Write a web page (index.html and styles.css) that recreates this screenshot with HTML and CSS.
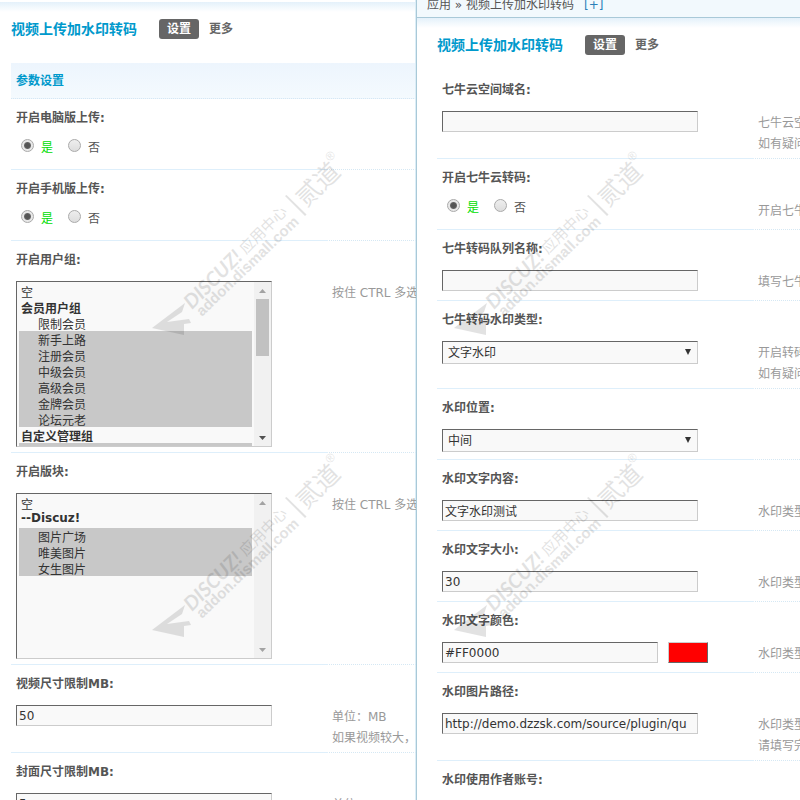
FILE: index.html
```html
<!DOCTYPE html>
<html lang="zh-CN">
<head>
<meta charset="utf-8">
<title>视频上传加水印转码</title>
<link rel="stylesheet" href="styles.css">
</head>
<body>
<main class="split">
  <section class="pane pane-left">
    <div class="body">
      <header class="heading">
        <h1>视频上传加水印转码</h1>
        <a class="tab current" href="#settings">设置</a>
        <a class="tab" href="#more">更多</a>
      </header>
      <h2 class="group">参数设置</h2>

      <fieldset class="row">
        <legend class="label">开启电脑版上传:</legend>
        <div class="field radios">
          <label class="on"><input type="radio" name="pc" checked>是</label>
          <label><input type="radio" name="pc">否</label>
        </div>
        <p class="note"></p>
      </fieldset>

      <fieldset class="row">
        <legend class="label">开启手机版上传:</legend>
        <div class="field radios">
          <label class="on"><input type="radio" name="mobile" checked>是</label>
          <label><input type="radio" name="mobile">否</label>
        </div>
        <p class="note"></p>
      </fieldset>

      <div class="row">
        <label class="label" for="groups">开启用户组:</label>
        <div class="field">
          <div class="listbox">
            <select id="groups" multiple size="10">
              <option>空</option>
              <optgroup label="会员用户组">
                <option>限制会员</option>
                <option selected>新手上路</option>
                <option selected>注册会员</option>
                <option selected>中级会员</option>
                <option selected>高级会员</option>
                <option selected>金牌会员</option>
                <option selected>论坛元老</option>
              </optgroup>
              <optgroup label="自定义管理组">
                <option selected>网站编辑</option>
                <option>信息监察员</option>
                <option>审核员</option>
              </optgroup>
            </select>
            <div class="scrollbar" aria-hidden="true">
              <svg width="17" height="17"><path d="M5 11 L8.500 7 L12 11 Z" fill="#a3a3a3"/></svg>
              <span class="thumb"></span>
              <svg width="17" height="17"><path d="M5 7 L12 7 L8.500 11 Z" fill="#505050"/></svg>
            </div>
          </div>
        </div>
        <p class="note">按住 CTRL 多选</p>
      </div>

      <div class="row">
        <label class="label" for="forums">开启版块:</label>
        <div class="field">
          <div class="listbox">
            <select id="forums" multiple size="10">
              <option>空</option>
              <optgroup label="--Discuz!">
                <option selected>图片广场</option>
                <option selected>唯美图片</option>
                <option selected>女生图片</option>
              </optgroup>
            </select>
            <div class="scrollbar" aria-hidden="true">
              <svg width="17" height="17"><path d="M5 11 L8.500 7 L12 11 Z" fill="#a3a3a3"/></svg>
              <svg width="17" height="17"><path d="M5 7 L12 7 L8.500 11 Z" fill="#a3a3a3"/></svg>
            </div>
          </div>
        </div>
        <p class="note">按住 CTRL 多选</p>
      </div>

      <div class="row">
        <label class="label" for="video-size">视频尺寸限制MB:</label>
        <div class="field"><input class="text" id="video-size" type="text" value="50"></div>
        <p class="note">单位：MB<br>如果视频较大，</p>
      </div>

      <div class="row">
        <label class="label" for="cover-size">封面尺寸限制MB:</label>
        <div class="field"><input class="text" id="cover-size" type="text" value="5"></div>
        <p class="note">单位：MB</p>
      </div>
    </div>
  </section>

  <section class="pane pane-right">
    <nav class="crumbs"><span>应用 » 视频上传加水印转码</span><a href="#add">[+]</a></nav>
    <div class="body">
      <header class="heading">
        <h1>视频上传加水印转码</h1>
        <a class="tab current" href="#settings">设置</a>
        <a class="tab" href="#more">更多</a>
      </header>

      <div class="row">
        <label class="label" for="domain">七牛云空间域名:</label>
        <div class="field"><input class="text" id="domain" type="text"></div>
        <p class="note">七牛云空间<br>如有疑问请</p>
      </div>

      <fieldset class="row">
        <legend class="label">开启七牛云转码:</legend>
        <div class="field radios">
          <label class="on"><input type="radio" name="transcode" checked>是</label>
          <label><input type="radio" name="transcode">否</label>
        </div>
        <p class="note">开启七牛云</p>
      </fieldset>

      <div class="row">
        <label class="label" for="queue">七牛转码队列名称:</label>
        <div class="field"><input class="text" id="queue" type="text"></div>
        <p class="note">填写七牛云</p>
      </div>

      <div class="row">
        <label class="label" for="mark-type">七牛转码水印类型:</label>
        <div class="field drop">
          <select id="mark-type"><option>文字水印</option><option>图片水印</option></select>
        </div>
        <p class="note">开启转码后<br>如有疑问请</p>
      </div>

      <div class="row">
        <label class="label" for="mark-place">水印位置:</label>
        <div class="field drop">
          <select id="mark-place"><option>中间</option></select>
        </div>
        <p class="note"></p>
      </div>

      <div class="row">
        <label class="label" for="mark-text">水印文字内容:</label>
        <div class="field"><input class="text" id="mark-text" type="text" value="文字水印测试"></div>
        <p class="note">水印类型为</p>
      </div>

      <div class="row">
        <label class="label" for="mark-size">水印文字大小:</label>
        <div class="field"><input class="text" id="mark-size" type="text" value="30"></div>
        <p class="note">水印类型为</p>
      </div>

      <div class="row">
        <label class="label" for="mark-color">水印文字颜色:</label>
        <div class="field">
          <input class="text short" id="mark-color" type="text" value="#FF0000">
          <button class="swatch" type="button" aria-label="选择颜色"></button>
        </div>
        <p class="note">水印类型为</p>
      </div>

      <div class="row">
        <label class="label" for="mark-image">水印图片路径:</label>
        <div class="field"><input class="text" id="mark-image" type="text" value="http://demo.dzzsk.com/source/plugin/qu"></div>
        <p class="note">水印类型为<br>请填写完整</p>
      </div>

      <div class="row">
        <label class="label" for="author">水印使用作者账号:</label>
        <div class="field"><input class="text" id="author" type="text"></div>
        <p class="note"></p>
      </div>
    </div>
  </section>
</main>

<svg class="watermark" width="800" height="800" aria-hidden="true">
  <defs>
    <g id="mark">
      <path d="M152 328 L185 303 L182 312 L167 322 L189 319 L191 323 L184 324 L184 335 Z"/>
      <g transform="translate(192 310) rotate(-45)">
        <text class="wm-brand" x="0" y="0">DISCUZ!</text>
        <text class="wm-cn" x="77" y="-1">应用中心</text>
      </g>
      <text class="wm-url" transform="translate(202 317) rotate(-44)">addon.dismall.com</text>
      <path d="M285 196 L286.500 195 L306.500 214.500 L305 216 Z"/>
      <text class="wm-name" transform="translate(306 208) rotate(-44)">贰道</text>
      <text class="wm-reg" transform="translate(330 162) rotate(-45)">®</text>
    </g>
  </defs>
  <use href="#mark"/>
  <use href="#mark" x="302"/>
  <use href="#mark" y="302"/>
  <use href="#mark" x="302" y="302"/>
</svg>
</body>
</html>
```
FILE: styles.css
```css
* { box-sizing: border-box; }

body {
  margin: 0;
  height: 100vh;
  overflow: hidden;
  position: relative;
  background: #fff;
  color: #555;
  font: 12px/21px "DejaVu Sans", "Noto Sans CJK SC", sans-serif;
}

input, select, button { font: inherit; color: #333; margin: 0; }
a { color: inherit; text-decoration: none; }

.split {
  display: grid;
  grid-template-columns: 52fr 48fr;
  height: 100%;
}

.pane {
  min-width: 0;
  overflow: hidden;
  white-space: nowrap;
}
.pane-left { border-top: 2px solid #fff; }
.pane-right { border-left: 1px solid #a9c9d8; box-shadow: -1px 0 #dcedf6; }

.body { background: linear-gradient(#e4f1fa, #fff 10px); }
.pane-left .body { padding-left: 11px; }
.pane-right .body { padding-left: 20px; }

.crumbs {
  height: 18px;
  padding: 0 10px 1px;
  display: flex;
  align-items: flex-end;
  gap: 10px;
  background: #f2f9fd;
  border-bottom: 1px solid #a9c9d8;
  line-height: 22px;
}
.crumbs a { color: #2a7fb8; }

.heading {
  display: flex;
  align-items: center;
  padding: 17px 0 16px;
  line-height: 20px;
}
.heading h1 {
  margin: 0 22px 0 0;
  font-size: 14px;
  font-weight: bold;
  color: #0099cc;
}
.tab { padding: 0 4px; font-weight: bold; color: #666; }
.tab.current {
  padding: 0 8px;
  margin-right: 6px;
  border-radius: 3px;
  background: #666;
  color: #fff;
}

.group {
  margin: 8px 0 0;
  padding: 2px 5px 0;
  font-size: 12px;
  line-height: 33px;
  color: #0099cc;
  background: linear-gradient(#edf5fd, #f4fafe);
  border-bottom: 1px dotted #d5e8f4;
}

.row {
  display: grid;
  grid-template-columns: 317px 1fr;
  margin: 0;
  padding: 0;
  border: 0;
  position: relative;
}
.row + .row { border-top: 1px dotted #d5e8f4; }
.row + .row::before {
  content: "";
  position: absolute;
  top: -1px;
  left: 0;
  width: 317px;
  height: 1px;
  background: #deeffb;
}
.label {
  grid-column: 1 / -1;
  float: left;
  width: 100%;
  padding: 9px 5px 10px;
  font-weight: bold;
}
.field {
  display: flex;
  align-items: flex-start;
  gap: 10px;
  min-height: 30px;
  padding: 0 5px 5px;
}
.note {
  margin: 0;
  padding: 2px 4px 3px;
  color: #999;
}

.text, .listbox, .drop select {
  width: 256px;
  border: 1px solid;
  border-color: #666 #ccc #ccc #666;
  border-radius: 0;
  background: #f9f9f9;
  outline: 0;
}
.text { height: 21px; padding: 2px; line-height: 15px; }
.text.short { width: 216px; }

.swatch {
  width: 40px;
  height: 21px;
  padding: 0;
  border: 1px solid;
  border-color: #ccc #666 #666 #ccc;
  background: #f00;
}

.drop { position: relative; }
.drop select { appearance: none; height: 23px; padding: 1px 5px 0; }
.drop::after {
  content: "";
  position: absolute;
  left: 248px;
  top: 8px;
  border: 3px solid transparent;
  border-top: 6px solid #333;
  border-bottom: 0;
}

.radios { gap: 15px; padding-left: 10px; line-height: 18px; }
.radios label { display: flex; align-items: flex-start; gap: 7px; height: 14px; }
.radios .on { color: #00dd00; }
.radios input {
  appearance: none;
  width: 13px;
  height: 13px;
  border: 1px solid #aaa;
  border-radius: 50%;
  background: linear-gradient(#eee, #ddd);
}
.radios input:checked { background: radial-gradient(circle, #555 0 2px, #666 3px, #e8e8e8 4px); }

.listbox { display: flex; height: 166px; }
.listbox select {
  flex: 1;
  height: 100%;
  padding: 1px 2px;
  border: 0;
  border-radius: 0;
  outline: 0;
  background: transparent;
  scrollbar-width: none;
}
.listbox option { height: 16px; min-height: 16px; padding: 0 2px; line-height: 16px; }
.listbox optgroup { padding: 0; font-weight: bold; }
.listbox optgroup option { padding-left: 19px; font-weight: normal; }
.listbox optgroup option:first-of-type { margin-top: -2px; }
#forums optgroup option:first-of-type { margin-top: 2px; }
.listbox option:checked { background: #c8c8c8 linear-gradient(#c8c8c8, #c8c8c8); color: #333; }
.scrollbar {
  width: 17px;
  display: flex;
  flex-direction: column;
  background: #f1f1f1;
}
.scrollbar svg:last-child { margin-top: auto; }
.thumb { height: 57px; margin: 0 2px; background: #c1c1c1; }

.watermark {
  position: absolute;
  top: 0;
  left: 0;
  pointer-events: none;
  fill: #000;
  opacity: 0.11;
}
.wm-brand { font: italic bold 20px Lato, sans-serif; }
.wm-cn { font: 15px "Noto Sans CJK SC", sans-serif; }
.wm-url { font: bold 15px "Liberation Sans", sans-serif; }
.wm-name { font: 25px "Noto Sans CJK SC", sans-serif; }
.wm-reg { font: 12px "Liberation Sans", sans-serif; }
```
